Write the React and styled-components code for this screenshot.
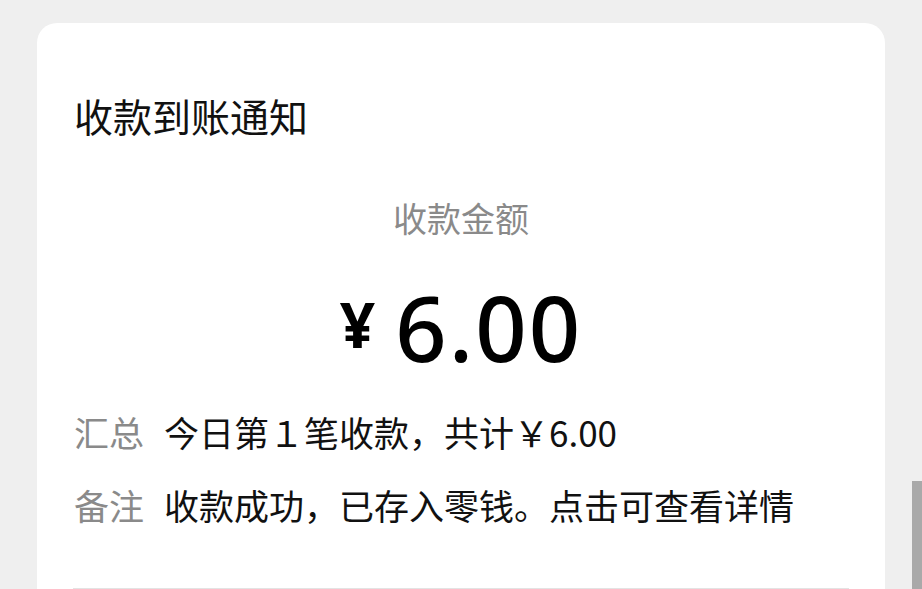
import React from "react";
import styled, { createGlobalStyle } from "styled-components";

const Global = createGlobalStyle`
  html, body { margin: 0; padding: 0; background: #efefef; overflow: hidden; }
  body { font-family: "Noto Sans CJK SC", "Noto Sans", sans-serif; }
`;

const Page = styled.div`
  width: 922px;
  height: 589px;
  box-sizing: border-box;
  padding: 23px 37px 0 37px;
  overflow: hidden;
  position: relative;
`;

const Card = styled.div`
  background: #ffffff;
  border-radius: 20px;
  padding: 66px 36px 0 36px;
  height: 800px;
  box-sizing: border-box;
`;

const Title = styled.div`
  font-size: 39px;
  line-height: 52px;
  color: #111;
  padding-left: 1px;
`;

const Label = styled.div`
  margin-top: 55px;
  text-align: center;
  font-size: 34px;
  line-height: 44px;
  color: #8a8a8a;
`;

const Amount = styled.div`
  margin-top: 42px;
  display: flex;
  justify-content: center;
  align-items: baseline;
  color: #000;
  font-family: "Noto Sans", sans-serif;
  line-height: 90px;
`;

const Yen = styled.span`
  font-size: 62px;
  font-weight: 700;
  margin-right: 20px;
  position: relative;
  top: -14px;
`;

const Num = styled.span`
  font-size: 90px;
  font-weight: 500;
  letter-spacing: 2px;
`;

const Rows = styled.div`
  margin-top: 26px;
  display: flex;
  flex-direction: column;
  gap: 27px;
`;

const Row = styled.div`
  display: flex;
  align-items: center;
  font-size: 35px;
  line-height: 46px;
  padding-left: 1px;
`;

const Key = styled.span`
  color: #8a8a8a;
  width: 90px;
  flex: none;
`;

const Value = styled.span`
  color: #111;
`;

const Divider = styled.div`
  margin-top: 60px;
  height: 1px;
  background: #e3e3e3;
`;

const Scrollbar = styled.div`
  position: absolute;
  right: 0;
  top: 481px;
  width: 10px;
  height: 120px;
  background: #a9a9a9;
`;

export default function App() {
  return (
    <>
      <Global />
      <Page>
        <Card>
          <Title>收款到账通知</Title>
          <Label>收款金额</Label>
          <Amount>
            <Yen>¥</Yen>
            <Num>6.00</Num>
          </Amount>
          <Rows>
            <Row>
              <Key>汇总</Key>
              <Value>今日第１笔收款，共计￥6.00</Value>
            </Row>
            <Row>
              <Key>备注</Key>
              <Value>收款成功，已存入零钱。点击可查看详情</Value>
            </Row>
          </Rows>
          <Divider />
        </Card>
        <Scrollbar />
      </Page>
    </>
  );
}
